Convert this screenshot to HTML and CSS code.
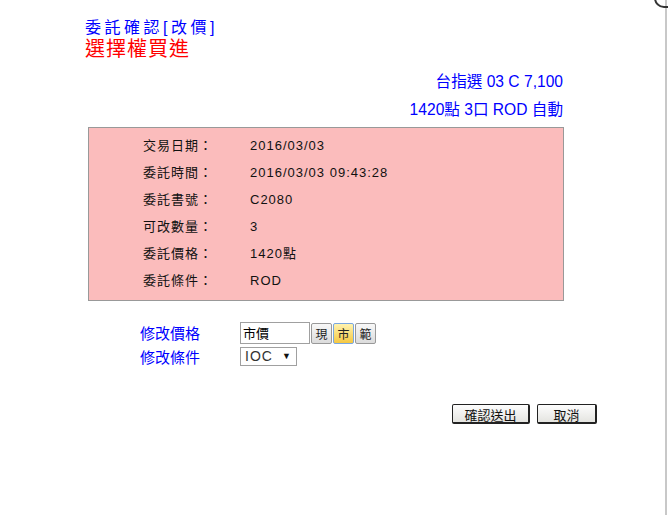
FILE: index.html
```html
<!DOCTYPE html>
<html lang="zh-Hant">
<head>
    <meta charset="UTF-8">
    <title>委託確認</title>
    <link rel="stylesheet" href="styles.css">
</head>
<body>
    <div class="frame">
        <div class="corner"></div>
        <div class="header">
            <div class="title">委託確認[改價]</div>
            <div class="subtitle">選擇權買進</div>
        </div>

        <div class="main">
            <div class="summary">
                <div>台指選 03 C 7,100</div>
                <div>1420點 3口 ROD 自動</div>
            </div>

            <div class="detail">
                <div class="row"><span class="label">交易日期：</span><span>2016/03/03</span></div>
                <div class="row"><span class="label">委託時間：</span><span>2016/03/03 09:43:28</span></div>
                <div class="row"><span class="label">委託書號：</span><span>C2080</span></div>
                <div class="row"><span class="label">可改數量：</span><span>3</span></div>
                <div class="row"><span class="label">委託價格：</span><span>1420點</span></div>
                <div class="row"><span class="label">委託條件：</span><span>ROD</span></div>
            </div>

            <div class="form">
                <div class="form-row">
                    <span class="form-label">修改價格</span>
                    <input type="text" class="price-input" value="市價">
                    <button class="mini-btn">現</button><button class="mini-btn active">市</button><button class="mini-btn">範</button>
                </div>
                <div class="form-row">
                    <span class="form-label">修改條件</span>
                    <div class="select">IOC <span class="arrow">▼</span></div>
                </div>
            </div>

            <div class="actions">
                <button class="button confirm">確認送出</button>
                <button class="button cancel">取消</button>
            </div>
        </div>
    </div>
</body>
</html>
```

FILE: styles.css
```css
body {
    margin: 0;
    background-color: white;
    font-family: "Liberation Sans", Arial, "Noto Sans CJK TC", sans-serif;
}
.frame {
    width: 665px;
    height: 515px;
    border-right: 2px solid #c8c8c8;
    position: relative;
}
.corner {
    position: absolute;
    right: -3px;
    top: -6px;
    width: 12px;
    height: 12px;
    border: 2px solid #333;
    border-radius: 0 0 0 10px;
    border-top: none;
    border-right: none;
}
.header {
    padding: 17px 0 0 85px;
}
.title {
    color: #0000ff;
    font-size: 16px;
    line-height: 21px;
    letter-spacing: 3.5px;
}
.subtitle {
    color: #ff0000;
    font-size: 20px;
    line-height: 22px;
    letter-spacing: 1px;
}
.main {
    margin-left: 88px;
    width: 476px;
}
.summary {
    text-align: right;
    color: #0000ff;
    font-size: 15.6px;
    line-height: 28px;
    padding-top: 8px;
    margin-bottom: 3px;
    margin-right: 1px;
}
.detail {
    background-color: #fbbcbc;
    border: 1px solid #999;
    padding: 4px 0 6px 54px;
}
.row {
    height: 27px;
    line-height: 27px;
    font-size: 13px;
    letter-spacing: 1px;
    color: #111;
    display: flex;
}
.label {
    width: 107px;
}
.form {
    margin-top: 20px;
    padding-left: 52px;
}
.form-row {
    display: flex;
    align-items: center;
    margin-bottom: 2px;
}
.form-label {
    color: #0000ff;
    font-size: 15px;
    width: 100px;
}
.price-input {
    width: 64px;
    height: 20px;
    padding: 0 2px;
    border: 1px solid #a0a0a0;
    font-size: 13px;
    font-family: "Noto Sans CJK TC", sans-serif;
    margin: 0 1px 0 0;
}
.mini-btn {
    width: 21px;
    height: 21px;
    padding: 0;
    margin: 2px 1px 0 0;
    font-size: 12px;
    font-family: "Noto Sans CJK TC", sans-serif;
    border: 1px solid #999;
    border-radius: 2px;
    background: linear-gradient(#f8f8f8, #dcdcdc);
    color: #222;
}
.mini-btn.active {
    background: linear-gradient(#fff3b0, #f5c842);
    border-color: #7aa7e0;
}
.select {
    width: 47px;
    height: 17px;
    line-height: 17px;
    border: 1px solid #a0a0a0;
    padding: 0 4px;
    font-size: 14px;
    color: #333;
    letter-spacing: 1px;
    display: flex;
    justify-content: space-between;
}
.arrow {
    font-size: 9px;
    color: #111;
}
.actions {
    margin-top: 37px;
    display: flex;
    justify-content: flex-end;
    gap: 7px;
    margin-right: -33px;
}
.button {
    height: 20px;
    padding: 0;
    font-size: 13px;
    font-family: "Noto Sans CJK TC", sans-serif;
    color: #111;
    background: linear-gradient(#fdfdfd, #e4e4e0);
    border: 1px solid #222;
    border-right-width: 2px;
    border-bottom-width: 2px;
    border-radius: 2px;
}
.confirm {
    width: 78px;
}
.cancel {
    width: 60px;
}
```
